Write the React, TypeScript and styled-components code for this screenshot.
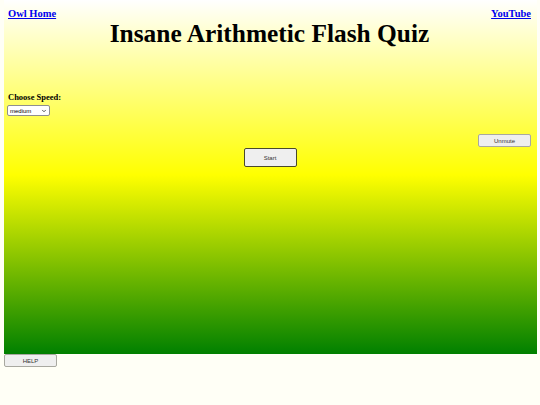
import React, { useState } from 'react'
import styled, { createGlobalStyle } from 'styled-components'
import { ChevronDown } from 'lucide-react'

const GlobalStyle = createGlobalStyle`
  html, body {
    margin: 0;
    padding: 0;
    background: #fffff6;
  }
  body {
    font-family: "Liberation Serif", "Times New Roman", serif;
  }
`

const Page = styled.div`
  width: 540px;
  height: 405px;
  background: #fffff6;
`

const Stage = styled.main`
  margin: 0 3px 0 4px;
  height: 354px;
  box-sizing: border-box;
  background: linear-gradient(to bottom, #ffffff 0px, #ffff00 175px, #008000 354px);
  padding: 8px 6px 0 4px;
  display: flex;
  flex-direction: column;
`

const TopLinks = styled.nav`
  display: flex;
  justify-content: space-between;
  height: 12px;
`

const NavLink = styled.a`
  font-size: 10.5px;
  font-weight: bold;
  color: #0000ee;
  text-decoration: underline;
  line-height: 12px;
`

const Title = styled.h1`
  margin: 0;
  text-align: center;
  font-size: 25.4px;
  line-height: 26px;
  font-weight: bold;
  color: #000;
`

const SpeedBlock = styled.section`
  margin-top: 46px;
  display: flex;
  flex-direction: column;
  align-items: flex-start;
  gap: 2px;
`

const Label = styled.label`
  font-size: 8.5px;
  font-weight: bold;
  line-height: 11px;
`

const SelectWrap = styled.div`
  position: relative;
  width: 43px;
  height: 11px;
`

const SpeedSelect = styled.select`
  appearance: none;
  display: block;
  box-sizing: border-box;
  font-family: "Liberation Sans", Arial, sans-serif;
  font-size: 6px;
  height: 11px;
  width: 43px;
  padding: 0 0 0 2px;
  margin: 0;
  margin-left: -1px;
  border: 1px solid #8f8f8f;
  border-radius: 2px;
  background: #fff;
  color: #000;
`

const Caret = styled(ChevronDown)`
  position: absolute;
  right: 4px;
  top: 2.5px;
  width: 6px;
  height: 6px;
  color: #222;
  pointer-events: none;
`

const Controls = styled.div`
  margin-top: 18px;
  display: flex;
  flex-direction: column;
`

const RightRow = styled.div`
  display: flex;
  justify-content: flex-end;
`

const CenterRow = styled.div`
  display: flex;
  justify-content: center;
  margin-left: 1px;
  margin-top: 1px;
`

const FlatButton = styled.button<{ $strong?: boolean; $tall?: boolean }>`
  font-family: "Liberation Sans", Arial, sans-serif;
  font-size: 6px;
  color: #333;
  background: #efefef;
  width: 53px;
  height: ${({ $tall }) => ($tall ? '19px' : '13px')};
  border: ${({ $strong }) => ($strong ? '1.5px solid #4a4a2a' : '1px solid #a8a8a0')};
  border-radius: 2px;
  padding: 0;
  cursor: pointer;
`

const Footer = styled.div`
  display: flex;
  padding-left: 4px;
`

export default function App() {
  const [speed, setSpeed] = useState('medium')
  const [muted, setMuted] = useState(true)

  return (
    <Page>
      <GlobalStyle />
      <Stage>
        <TopLinks>
          <NavLink href="#">Owl Home</NavLink>
          <NavLink href="#">YouTube</NavLink>
        </TopLinks>
        <Title>Insane Arithmetic Flash Quiz</Title>
        <SpeedBlock>
          <Label htmlFor="speed">Choose Speed:</Label>
          <SelectWrap>
            <SpeedSelect id="speed" value={speed} onChange={e => setSpeed(e.target.value)}>
              <option value="slow">slow</option>
              <option value="medium">medium</option>
              <option value="fast">fast</option>
              <option value="insane">insane</option>
            </SpeedSelect>
            <Caret strokeWidth={3} />
          </SelectWrap>
        </SpeedBlock>
        <Controls>
          <RightRow>
            <FlatButton onClick={() => setMuted(!muted)}>{muted ? 'Unmute' : 'Mute'}</FlatButton>
          </RightRow>
          <CenterRow>
            <FlatButton $strong $tall>Start</FlatButton>
          </CenterRow>
        </Controls>
      </Stage>
      <Footer>
        <FlatButton>HELP</FlatButton>
      </Footer>
    </Page>
  )
}
